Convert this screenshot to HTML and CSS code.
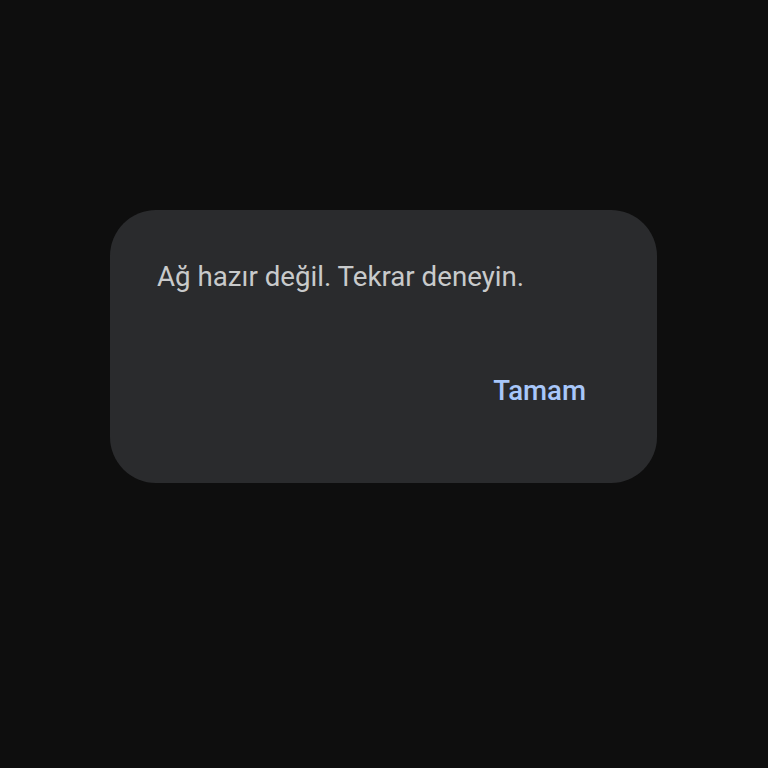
FILE: index.html
```html
<!DOCTYPE html>
<html lang="tr">
<head>
<meta charset="utf-8">
<link rel="stylesheet" href="styles.css">
</head>
<body>
<div class="screen">
  <div class="dialog">
    <p class="message">Ağ hazır değil. Tekrar deneyin.</p>
    <div class="actions">
      <button class="btn">Tamam</button>
    </div>
  </div>
</div>
</body>
</html>
```

FILE: styles.css
```css
html, body {
  margin: 0;
  padding: 0;
  background: #0e0e0e;
}
.screen {
  width: 768px;
  height: 768px;
  display: flex;
  flex-direction: column;
  align-items: flex-start;
  padding: 210px 0 0 110px;
  box-sizing: border-box;
}
.dialog {
  width: 547px;
  height: 273px;
  box-sizing: border-box;
  background: #2a2b2d;
  border-radius: 46px;
  padding: 52px 71px 0 47px;
  display: flex;
  flex-direction: column;
}
.message {
  margin: 0;
  font-family: Roboto, "Noto Sans", sans-serif;
  font-size: 27.7px;
  line-height: 30px;
  color: #c8cacb;
}
.actions {
  display: flex;
  justify-content: flex-end;
  margin-top: 84px;
}
.btn {
  background: none;
  border: none;
  padding: 0;
  font-family: Roboto, "Noto Sans", sans-serif;
  font-weight: 500;
  font-size: 27.6px;
  line-height: 30px;
  color: #a8c7fa;
}
```
